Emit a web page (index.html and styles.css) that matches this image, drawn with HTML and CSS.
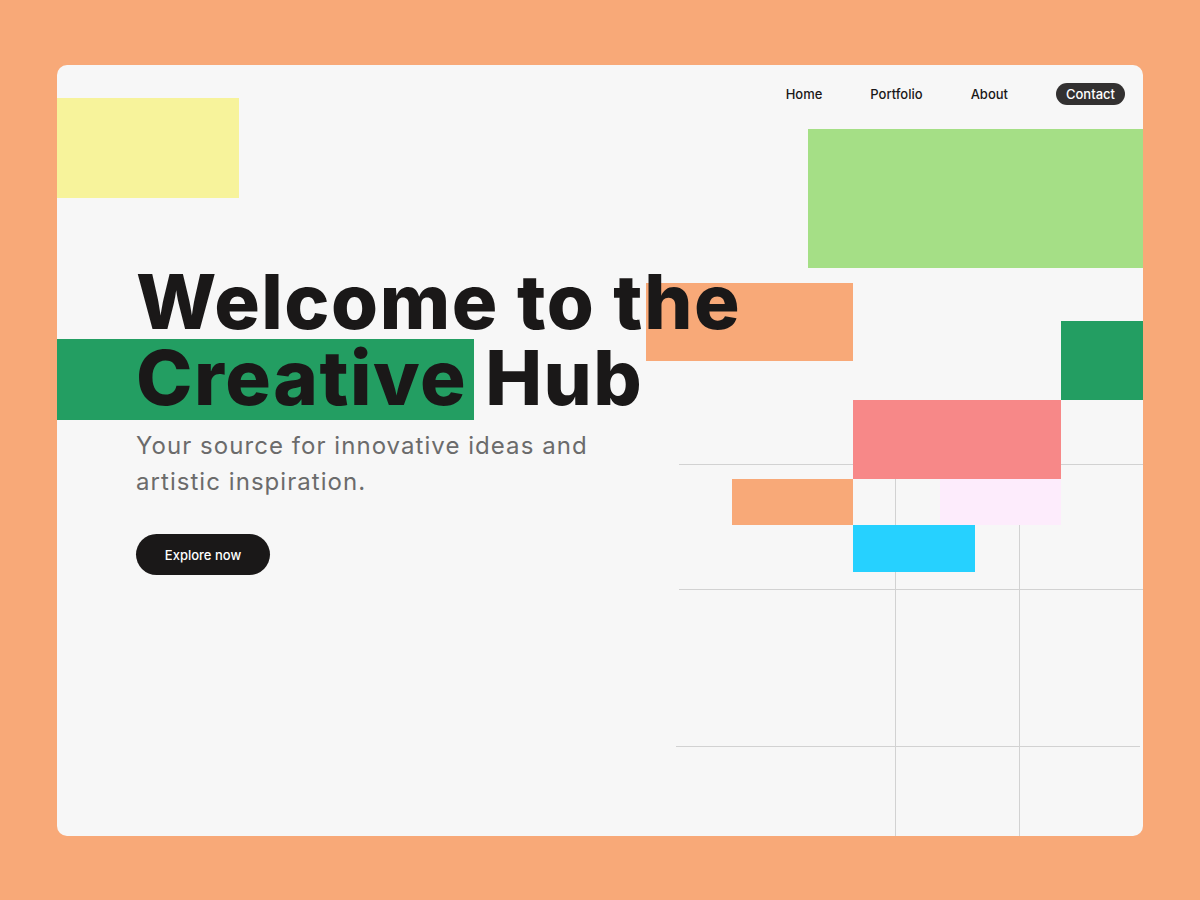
FILE: index.html
```html
<!DOCTYPE html>
<html lang="en">
<head>
<meta charset="utf-8">
<title>Creative Hub</title>
<link rel="stylesheet" href="styles.css">
</head>
<body>
<div class="card">
  <div class="shape yellow"></div>
  <div class="shape lightgreen"></div>
  <div class="shape orange-a"></div>
  <div class="shape greenbar"></div>
  <div class="shape darkgreen"></div>
  <div class="line h1"></div>
  <div class="line h2"></div>
  <div class="line h3"></div>
  <div class="line v1"></div>
  <div class="line v2"></div>
  <div class="shape red"></div>
  <div class="shape orange-b"></div>
  <div class="shape pink"></div>
  <div class="shape cyan"></div>

  <nav class="nav">
    <a class="nav-link" href="#">Home</a>
    <a class="nav-link" href="#">Portfolio</a>
    <a class="nav-link" href="#">About</a>
    <a class="nav-link nav-cta" href="#">Contact</a>
  </nav>

  <section class="hero">
    <h1 class="title">Welcome to the<br>Creative Hub</h1>
    <p class="subtitle">Your source for innovative ideas and<br>artistic inspiration.</p>
    <a class="btn" href="#">Explore now</a>
  </section>
</div>
</body>
</html>
```

FILE: styles.css
```css
* { box-sizing: border-box; }

body {
  margin: 0;
  background: #f8a978;
  font-family: Inter, "Open Sans", sans-serif;
  width: 1200px;
  height: 900px;
  overflow: hidden;
}

.card {
  position: relative;
  width: 1086px;
  height: 771px;
  margin: 65px 0 0 57px;
  background: #f7f7f7;
  border-radius: 10px;
  overflow: hidden;
  display: flex;
  flex-direction: column;
}

.shape, .line { position: absolute; }

.yellow { left: 0; top: 33px; width: 182px; height: 100px; background: #f7f39b; }
.lightgreen { left: 751px; top: 64px; width: 335px; height: 139px; background: #a5df86; }
.orange-a { left: 589px; top: 218px; width: 207px; height: 78px; background: #f8a978; }
.greenbar { left: 0; top: 274px; width: 417px; height: 81px; background: #239e62; }
.darkgreen { left: 1004px; top: 256px; width: 82px; height: 79px; background: #239e62; }
.red { left: 796px; top: 335px; width: 208px; height: 79px; background: #f78888; }
.orange-b { left: 675px; top: 414px; width: 121px; height: 46px; background: #f8a978; }
.pink { left: 883px; top: 414px; width: 121px; height: 46px; background: #fdecfc; }
.cyan { left: 796px; top: 460px; width: 122px; height: 47px; background: #26d1ff; }

.line { background: #d2d2d2; }
.h1 { left: 622px; top: 399px; width: 464px; height: 1px; }
.h2 { left: 622px; top: 524px; width: 464px; height: 1px; }
.h3 { left: 619px; top: 681px; width: 464px; height: 1px; }
.v1 { left: 838px; top: 399px; width: 1px; bottom: 0; }
.v2 { left: 962px; top: 399px; width: 1px; bottom: 0; }

.nav {
  position: relative;
  z-index: 2;
  display: flex;
  justify-content: flex-end;
  align-items: center;
  gap: 28px;
  padding: 18px 18px 0 0;
}

.nav-link {
  color: #1a1818;
  text-decoration: none;
  font-size: 13px;
  font-weight: 500;
  line-height: 16px;
  padding: 3px 10px;
  border-radius: 11px;
}

.nav-cta {
  margin-left: 10px;
  background: #333131;
  color: #ffffff;
}

.hero {
  position: relative;
  z-index: 2;
  padding-left: 79px;
  margin-top: 158px;
  display: flex;
  flex-direction: column;
  align-items: flex-start;
}

.title {
  margin: 0;
  font-size: 76px;
  line-height: 76px;
  font-weight: 800;
  color: #1a1818;
  letter-spacing: 1.5px;
}

.subtitle {
  margin: 13px 0 0;
  font-size: 24px;
  line-height: 36px;
  color: #6b6b6b;
  font-weight: 400;
  letter-spacing: 1.05px;
}

.btn {
  margin-top: 34px;
  height: 41px;
  width: 134px;
  display: flex;
  align-items: center;
  justify-content: center;
  background: #1a1818;
  color: #ffffff;
  font-size: 13px;
  font-weight: 500;
  text-decoration: none;
  border-radius: 21px;
}
```
